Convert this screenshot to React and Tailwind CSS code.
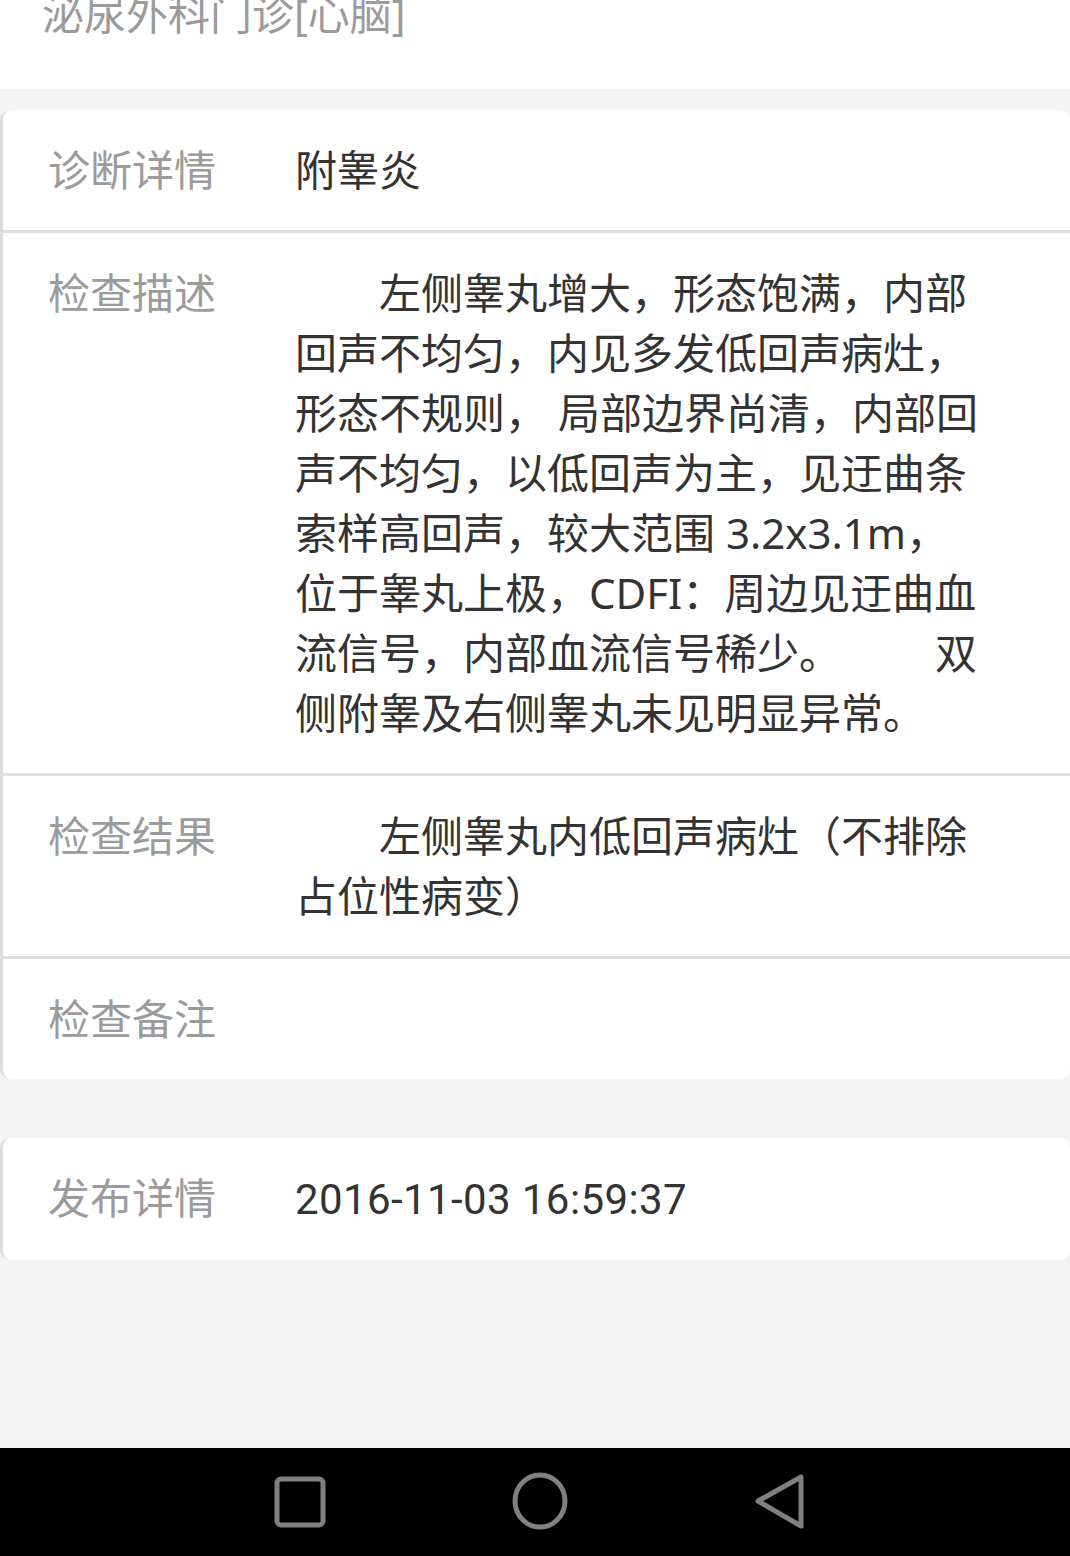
import React from "react";

const FONT = { fontFamily: '"Noto Sans", "Noto Sans CJK SC", sans-serif' };

function Row({ label, children, last }) {
  return (
    <div className={`flex pl-[45px] pr-[20px] py-[30px] ${last ? "" : "border-b-[3px] border-[#dedede]"}`}>
      <div className="w-[247px] shrink-0 text-[#9b9b9b]">{label}</div>
      <div className="flex-1 text-[#333333] whitespace-pre">{children}</div>
    </div>
  );
}

export default function App() {
  const desc = [
    "\u3000\u3000左侧睾丸增大，形态饱满，内部",
    "回声不均匀，内见多发低回声病灶，",
    "形态不规则， 局部边界尚清，内部回",
    "声不均匀，以低回声为主，见迂曲条",
    "索样高回声，较大范围 3.2x3.1m，",
    "位于睾丸上极，CDFI：周边见迂曲血",
  ];
  const result = ["\u3000\u3000左侧睾丸内低回声病灶（不排除", "占位性病变）"];
  return (
    <div className="min-h-[1556px] flex flex-col bg-[#f4f4f4] text-[42px] leading-[60px] overflow-hidden" style={FONT}>
      <div className="h-[89px] bg-white overflow-hidden">
        <div className="mt-[-16px] pl-[42px] text-[#9b9b9b]">泌尿外科门诊[心脑]</div>
      </div>

      <div className="mt-[21px] bg-white border-l-[3px] border-[#dcdcdc] rounded-[10px]">
        <Row label="诊断详情">附睾炎</Row>
        <Row label="检查描述">
          {desc.map((l, i) => (
            <div key={i}>{l}</div>
          ))}
          <div>
            流信号，内部血流信号稀少。<span className="ml-[94px]">双</span>
          </div>
          <div>侧附睾及右侧睾丸未见明显异常。</div>
        </Row>
        <Row label="检查结果">
          {result.map((l, i) => (
            <div key={i}>{l}</div>
          ))}
        </Row>
        <Row label="检查备注" last>
          {""}
        </Row>
      </div>

      <div className="mt-[59px] bg-white border-l-[3px] border-[#dcdcdc] rounded-[10px]">
        <Row label="发布详情" last>
          <span className="tracking-[0.4px]" style={{ fontFamily: 'Roboto, "Noto Sans", sans-serif' }}>
            2016-11-03 16:59:37
          </span>
        </Row>
      </div>

      <div className="mt-auto h-[108px] bg-black flex items-center">
        <svg width="1070" height="108" viewBox="0 0 1070 108" className="block">
          <rect x="277" y="31" width="46" height="46" rx="4" fill="none" stroke="#808080" strokeWidth="5" />
          <ellipse cx="540" cy="53" rx="25" ry="26" fill="none" stroke="#808080" strokeWidth="5" />
          <path
            d="M758 53 L801 29 L801 78 Z"
            fill="none"
            stroke="#808080"
            strokeWidth="5"
            strokeLinejoin="round"
          />
        </svg>
      </div>
    </div>
  );
}
